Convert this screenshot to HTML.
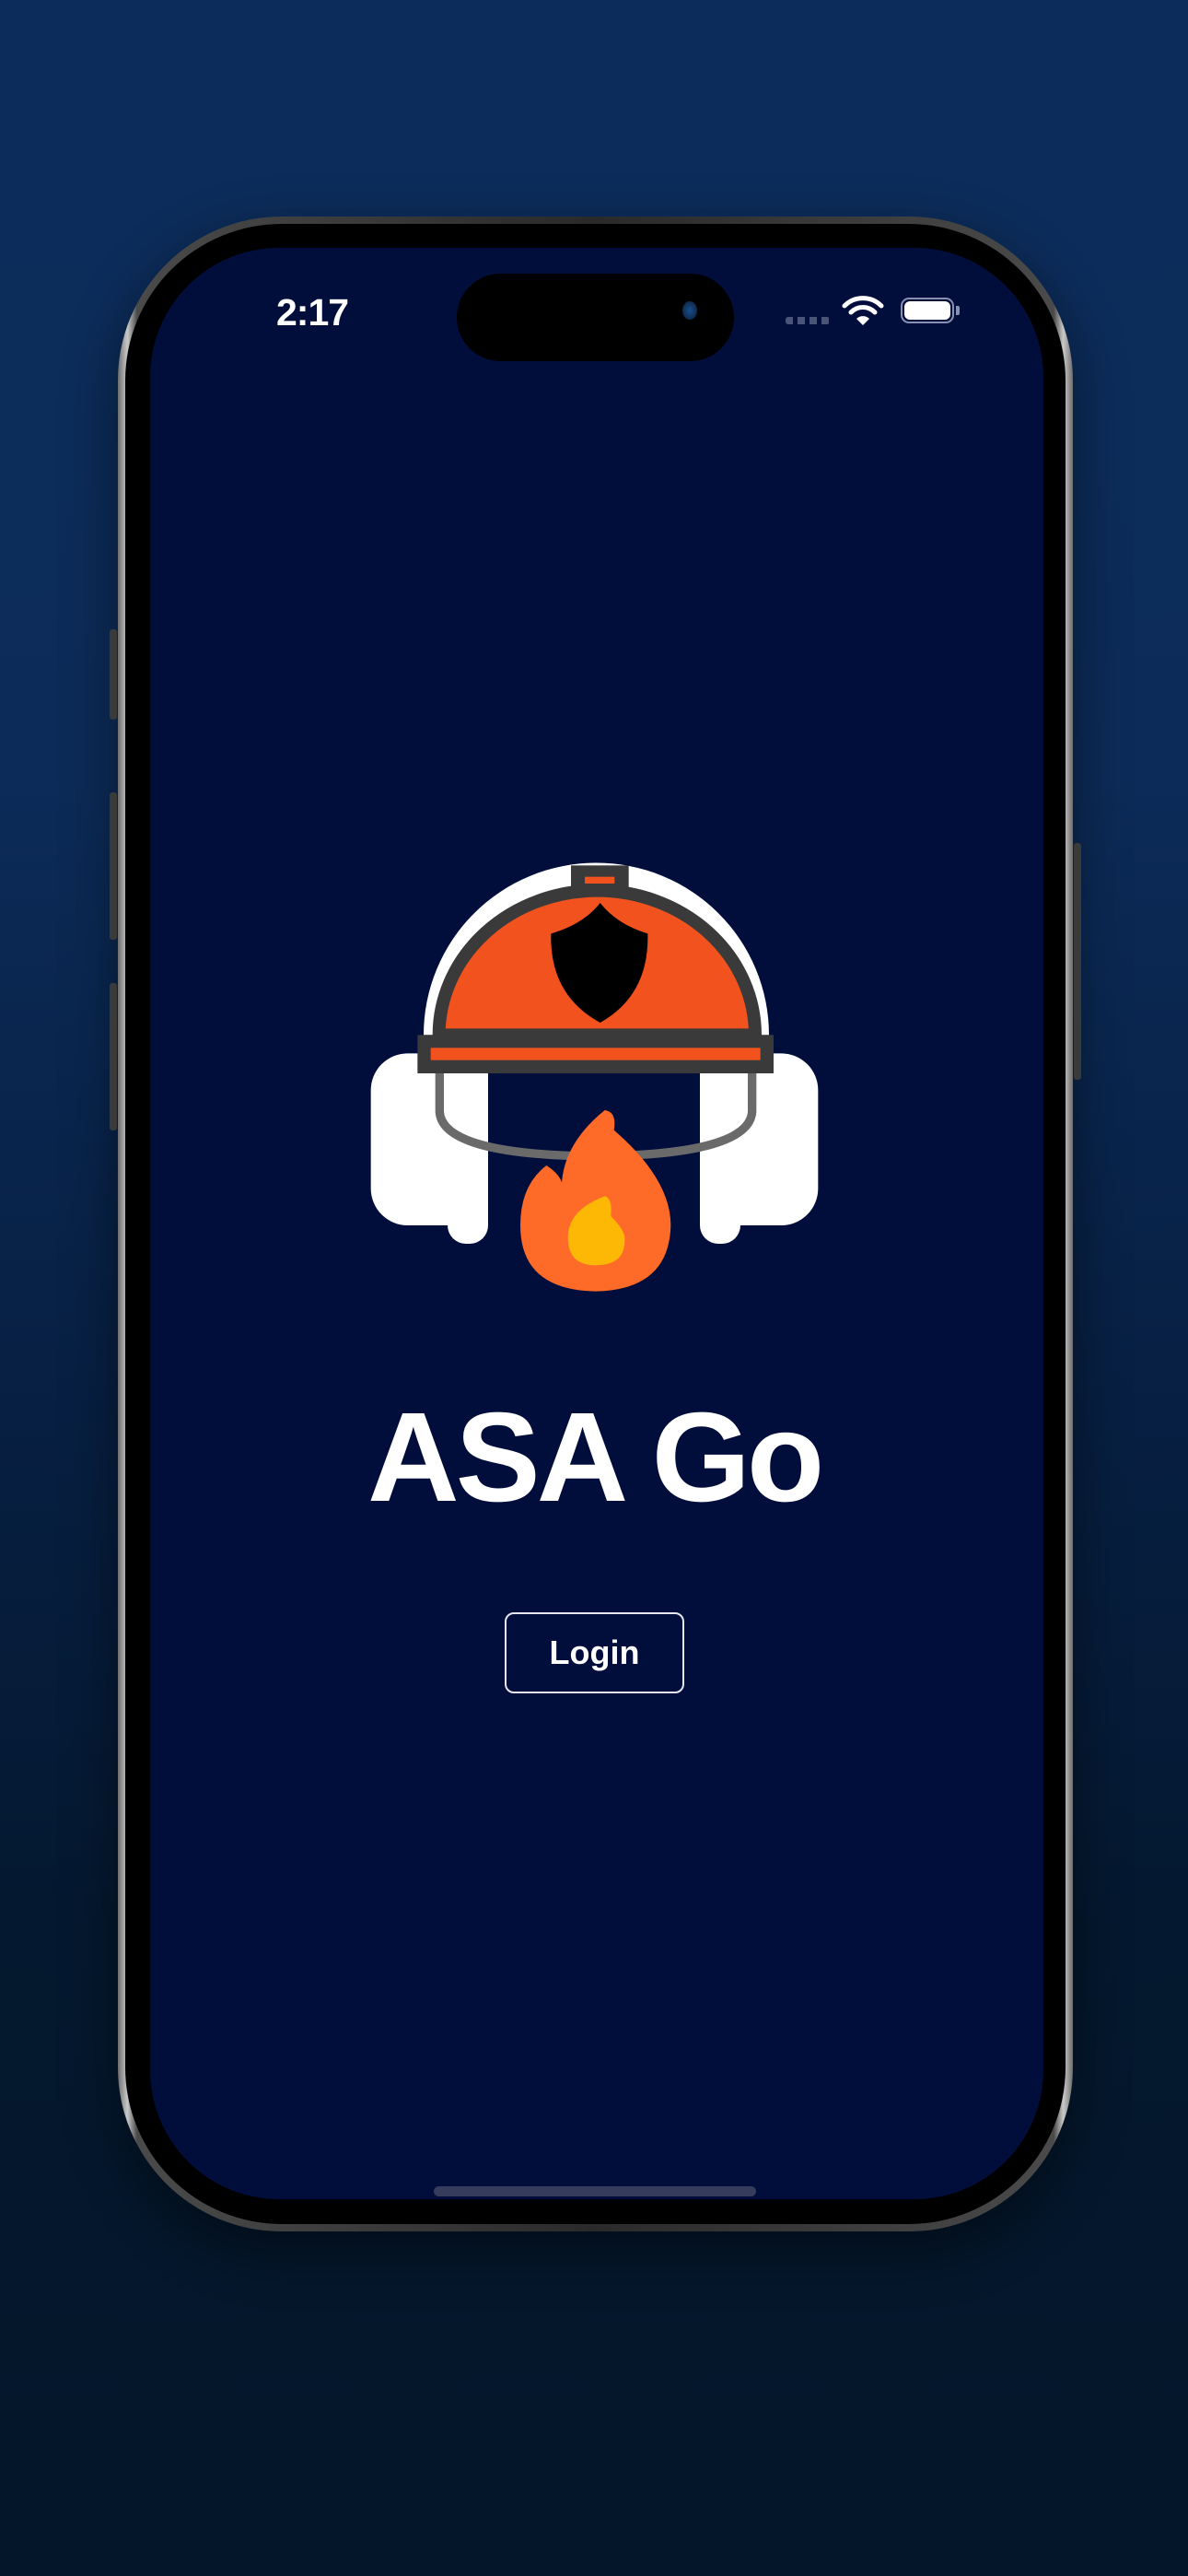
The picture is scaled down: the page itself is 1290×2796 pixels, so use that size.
<!DOCTYPE html>
<html><head><meta charset="utf-8"><style>
html,body{margin:0;padding:0}
body{width:1290px;height:2796px;position:relative;overflow:hidden;background:linear-gradient(180deg,#0c2d5c 0%,#0c2b58 30%,#071f42 55%,#04182f 75%,#041629 100%);font-family:"Liberation Sans",sans-serif}
.frame{position:absolute;left:128px;top:235px;width:1037px;height:2187px;border-radius:178px;background:linear-gradient(90deg,#6d6d6d,#c9c9c9 1%,#4a4a4a 2%,#2a2a2a 50%,#4a4a4a 98%,#c9c9c9 99%,#6d6d6d);box-shadow:0 20px 60px rgba(0,0,0,.45)}
.bezel{position:absolute;left:8px;top:8px;right:8px;bottom:8px;border-radius:170px;background:#000}
.screen{position:absolute;left:163px;top:269px;width:970px;height:2118px;border-radius:140px;background:#010d3b;overflow:hidden}
.btn{position:absolute;background:#3a3a3a;border-radius:3px}
</style></head><body>
<div class="frame"><div class="bezel"></div></div>
<div class="btn" style="left:119px;top:683px;width:8px;height:98px"></div>
<div class="btn" style="left:119px;top:860px;width:8px;height:160px"></div>
<div class="btn" style="left:119px;top:1067px;width:8px;height:160px"></div>
<div class="btn" style="left:1166px;top:915px;width:8px;height:257px"></div>
<div class="screen"></div>
<div style="position:absolute;left:496px;top:297px;width:301px;height:95px;border-radius:48px;background:#000"></div>
<div style="position:absolute;left:741px;top:327px;width:16px;height:20px;border-radius:50%;background:radial-gradient(#1a4f8f,#0a1a30)"></div>
<div style="position:absolute;left:300px;top:316px;color:#fff;font-size:41px;font-weight:bold;letter-spacing:-1px">2:17</div>
<div style="position:absolute;left:853px;top:344px;width:48px;height:8px;background:repeating-linear-gradient(90deg,#4a5478 0 8px,transparent 8px 13px);border-radius:3px"></div>
<svg style="position:absolute;left:914px;top:320px" width="46" height="34" viewBox="0 0 46 34"><path d="M3 12 A28 28 0 0 1 43 12" stroke="#fff" stroke-width="5" fill="none" stroke-linecap="round"/><path d="M10 19 A18 18 0 0 1 36 19" stroke="#fff" stroke-width="5" fill="none" stroke-linecap="round"/><path d="M16 26 L23 33 L30 26 A10 10 0 0 0 16 26Z" fill="#fff"/></svg>
<div style="position:absolute;left:978px;top:323px;width:58px;height:28px;border:2px solid #8890b0;border-radius:9px;box-sizing:border-box"></div>
<div style="position:absolute;left:982px;top:327px;width:50px;height:20px;background:#fff;border-radius:6px"></div>
<div style="position:absolute;left:1038px;top:332px;width:4px;height:10px;background:#8890b0;border-radius:0 2px 2px 0"></div>
<svg style="position:absolute;left:380px;top:920px" width="520" height="500" viewBox="0 0 1560 1500">
<path d="M240 610 A562 560 0 0 1 1365 610 Z" fill="#fff"/>
<rect x="68" y="670" width="382" height="560" rx="120" fill="#fff"/>
<rect x="318" y="1100" width="132" height="190" rx="60" fill="#fff"/>
<rect x="1140" y="670" width="385" height="560" rx="120" fill="#fff"/>
<rect x="1140" y="1100" width="132" height="190" rx="60" fill="#fff"/>
<rect x="305" y="720" width="145" height="480" fill="#fff"/>
<rect x="1140" y="720" width="145" height="480" fill="#fff"/>
<path d="M292 735 L292 860 Q300 1000 800 1005 Q1300 1000 1310 860 L1310 735" stroke="#6a6a6a" stroke-width="28" fill="none"/>
<path d="M290 610 A515 470 0 0 1 1320 610 Z" fill="#f2521d" stroke="#3a3a3a" stroke-width="42"/>
<rect x="720" y="58" width="188" height="100" fill="#3a3a3a"/>
<rect x="765" y="95" width="97" height="22" fill="#f2521d"/>
<path d="M815 180 Q760 250 655 280 Q650 480 815 570 Q975 480 970 280 Q870 250 815 180Z" fill="#000"/>
<rect x="220" y="610" width="1160" height="125" fill="#3a3a3a"/>
<rect x="263" y="652" width="1074" height="40" fill="#f2521d"/>
<path d="M830 855 Q870 860 860 920 Q1045 1080 1045 1230 Q1040 1440 800 1445 Q555 1440 555 1230 Q555 1100 640 1035 Q680 1060 690 1090 Q700 960 830 855Z" fill="#fe6a27"/>
<path d="M830 1135 Q855 1140 850 1200 Q900 1250 895 1280 Q895 1360 800 1360 Q710 1360 710 1270 Q710 1180 830 1135Z" fill="#fdb705"/>
</svg>
<div style="position:absolute;left:399px;top:1502px;width:520px;color:#fff;font-size:138px;font-weight:bold;letter-spacing:-4px;line-height:160px;white-space:nowrap">ASA Go</div>
<div style="position:absolute;left:548px;top:1750px;width:195px;height:88px;box-sizing:border-box;border:2px solid #e6e6ee;border-radius:10px;color:#fff;font-size:36px;font-weight:bold;text-align:center;line-height:84px">Login</div>
<div style="position:absolute;left:471px;top:2373px;width:350px;height:11px;border-radius:6px;background:#363d5c"></div>
</body></html>
